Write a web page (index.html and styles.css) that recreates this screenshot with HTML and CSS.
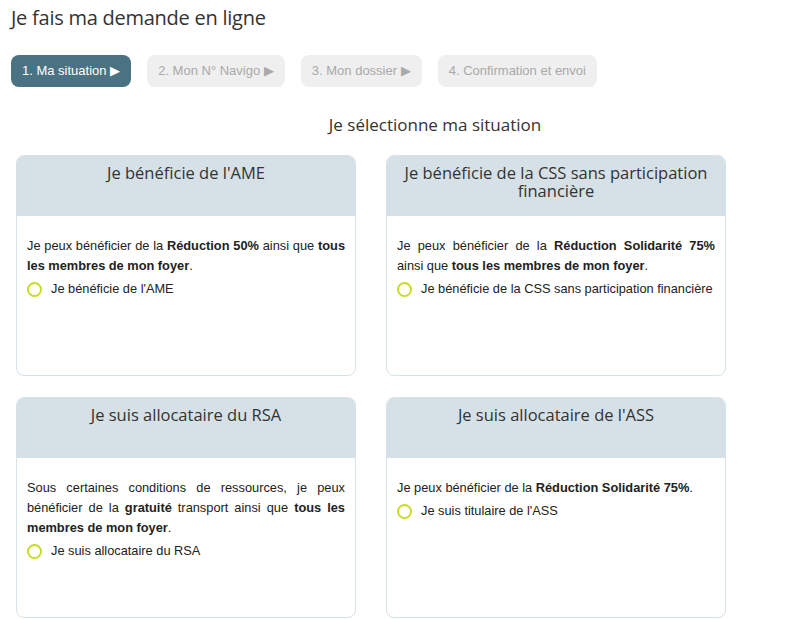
FILE: index.html
```html
<!DOCTYPE html>
<html lang="fr">
<head>
<meta charset="utf-8">
<title>Je fais ma demande en ligne</title>
<link rel="stylesheet" href="styles.css">
</head>
<body>
<div class="page">
  <h1 class="page-title">Je fais ma demande en ligne</h1>
  <nav class="steps">
    <span class="step step-active">1. Ma situation ▶</span>
    <span class="step">2. Mon N° Navigo ▶</span>
    <span class="step">3. Mon dossier ▶</span>
    <span class="step">4. Confirmation et envoi</span>
  </nav>
  <h2 class="section-title">Je sélectionne ma situation</h2>
  <div class="cards">
    <div class="card">
      <div class="card-head">Je bénéficie de l'AME</div>
      <div class="card-body">
        <p class="card-text">Je peux bénéficier de la <b>Réduction 50%</b> ainsi que <b>tous les membres de mon foyer</b>.</p>
        <label class="radio"><span class="radio-dot"></span>Je bénéficie de l'AME</label>
      </div>
    </div>
    <div class="card">
      <div class="card-head">Je bénéficie de la CSS sans participation financière</div>
      <div class="card-body">
        <p class="card-text">Je peux bénéficier de la <b>Réduction Solidarité 75%</b> ainsi que <b>tous les membres de mon foyer</b>.</p>
        <label class="radio"><span class="radio-dot"></span>Je bénéficie de la CSS sans participation financière</label>
      </div>
    </div>
    <div class="card">
      <div class="card-head">Je suis allocataire du RSA</div>
      <div class="card-body">
        <p class="card-text">Sous certaines conditions de ressources, je peux bénéficier de la <b>gratuité</b> transport ainsi que <b>tous les membres de mon foyer</b>.</p>
        <label class="radio"><span class="radio-dot"></span>Je suis allocataire du RSA</label>
      </div>
    </div>
    <div class="card">
      <div class="card-head">Je suis allocataire de l'ASS</div>
      <div class="card-body">
        <p class="card-text">Je peux bénéficier de la <b>Réduction Solidarité 75%</b>.</p>
        <label class="radio"><span class="radio-dot"></span>Je suis titulaire de l'ASS</label>
      </div>
    </div>
  </div>
</div>
</body>
</html>
```

FILE: styles.css
```css
html, body {
  margin: 0;
  padding: 0;
  background: #ffffff;
}

body {
  font-family: "Liberation Sans", Arial, sans-serif;
  color: #333333;
}

.page {
  padding: 4px 0 0 11px;
}

.page-title {
  margin: 0;
  font-family: "Open Sans", "Noto Sans", sans-serif;
  font-weight: 400;
  font-size: 20px;
  line-height: 27px;
  color: #333333;
  letter-spacing: -0.25px;
}

.steps {
  display: flex;
  gap: 16px;
  margin-top: 24px;
}

.step {
  display: inline-block;
  height: 32px;
  line-height: 32px;
  padding: 0 11px;
  border-radius: 8px;
  background: #efefef;
  color: #a9a9a9;
  font-size: 13px;
}

.step-active {
  background: #4b7283;
  color: #ffffff;
}

.section-title {
  margin: 26px 0 0 5px;
  width: 710px;
  padding-left: 128px;
  box-sizing: border-box;
  text-align: center;
  font-family: "Open Sans", "Noto Sans", sans-serif;
  font-weight: 400;
  font-size: 17px;
  line-height: 24px;
  color: #333333;
}

.cards {
  display: grid;
  grid-template-columns: 340px 340px;
  column-gap: 30px;
  row-gap: 21px;
  margin: 18px 0 0 5px;
}

.card {
  height: 221px;
  box-sizing: border-box;
  border: 1px solid #d8e2e9;
  border-radius: 8px;
  overflow: hidden;
  background: #ffffff;
}

.card-head {
  height: 60px;
  box-sizing: border-box;
  padding: 8px 16px 0;
  background: #d6e1e7;
  text-align: center;
  font-family: "Open Sans", "Noto Sans", sans-serif;
  font-size: 16.5px;
  line-height: 18px;
  color: #333333;
}

.card-body {
  padding: 20px 10px 0;
}

.card-text {
  margin: 0;
  font-size: 12.8px;
  line-height: 20px;
  text-align: justify;
  color: #222222;
}

.radio {
  display: flex;
  align-items: center;
  gap: 9px;
  margin-top: 3px;
  font-size: 12.8px;
  line-height: 20px;
  color: #222222;
  white-space: nowrap;
}

.radio-dot {
  width: 11px;
  height: 11px;
  border: 2px solid #c8dc24;
  border-radius: 50%;
  flex: none;
}
```
